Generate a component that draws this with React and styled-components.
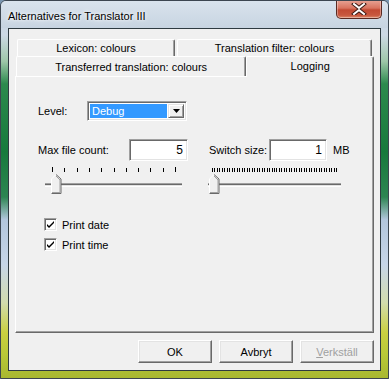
import React from 'react'
import styled, { createGlobalStyle } from 'styled-components';

const GlobalStyle = createGlobalStyle`
  body {
    margin: 0;
    background: #7a96b0;
    font-family: "Liberation Sans", Arial, sans-serif;
  }
`;

function Slider({ width, ticks, tickStart, tickEnd, thumbX, big }) {
  const list = [];
  for (let i = 0; i <= ticks; i++) {
    const x = Math.round(tickStart + (i * (tickEnd - tickStart)) / ticks) + 0.5;
    const tall = big && (i === 0 || i === ticks);
    list.push(<line key={i} x1={x} x2={x} y1={tall ? 1 : 2} y2={6} stroke="#000" strokeWidth="1" />);
  }
  return (
    <SliderSvg width={width} height={30} viewBox={`0 0 ${width} 30`}>
      {list}
      <rect x="1" y="17" width={width - 3} height="1" fill="#a0a0a0" />
      <rect x="1" y="18" width={width - 3} height="1" fill="#696969" />
      <rect x="1" y="19" width={width - 3} height="1" fill="#e3e3e3" />
      <rect x="1" y="20" width={width - 3} height="1" fill="#ffffff" />
      <g transform={`translate(${thumbX},8)`}>
        <path d="M0 5 L5 0 L10 5 L10 20 L0 20 Z" fill="#f0f0f0" />
        <path d="M0.5 20 L0.5 5 L5 0.5" fill="none" stroke="#fff" />
        <path d="M5 0.5 L10 5 L10 19.5 L0.5 19.5" fill="none" stroke="#696969" />
        <path d="M5 2 L9 6 L9 18.5 L1 18.5" fill="none" stroke="#a0a0a0" />
      </g>
    </SliderSvg>
  );
}

function Check({ label }) {
  return (
    <CheckRow>
      <CheckBox>
        <svg width="11" height="11" viewBox="0 0 11 11">
          <path d="M2 4 L2 6 L4 8 L9 3 L9 1 L4 6 Z" fill="#000" />
        </svg>
      </CheckBox>
      <span>{label}</span>
    </CheckRow>
  );
}

function App() {
  return (
    <>
      <GlobalStyle />
      <Ventana>
        <BarraTitulo>
          <Titulo>Alternatives for Translator III</Titulo>
          <BotonCerrar>
            <svg width="16" height="12" viewBox="0 0 16 12">
              <path d="M3 1 L8 5 L13 1 M3 11 L8 7 L13 11" fill="none" stroke="#3b1a14" strokeWidth="4" strokeLinecap="square" />
              <path d="M3 1 L8 5 L13 1 M3 11 L8 7 L13 11" fill="none" stroke="#fff" strokeWidth="2" strokeLinecap="square" />
            </svg>
          </BotonCerrar>
        </BarraTitulo>
        <Cliente>
          <Pestanas>
            <FilaPestanas $atras>
              <Pestana $w={158}>Lexicon: colours</Pestana>
              <Pestana $w={195}>Translation filter: colours</Pestana>
            </FilaPestanas>
            <FilaPestanas>
              <Pestana $w={231} $alto={20}>Transferred translation: colours</Pestana>
              <Pestana $w={128} $alto={21} $activa>Logging</Pestana>
            </FilaPestanas>
            <Panel>
              <Fila>
                <Etiqueta $w={49}>Level:</Etiqueta>
                <Combo>
                  <ComboTexto>Debug</ComboTexto>
                  <ComboBoton>
                    <svg width="7" height="4" viewBox="0 0 7 4"><path d="M0 0 L7 0 L3.5 4 Z" fill="#000" /></svg>
                  </ComboBoton>
                </Combo>
              </Fila>
              <Campos>
                <Grupo $w={150}>
                  <Fila>
                    <Etiqueta>Max file count:</Etiqueta>
                    <Entrada $w={59} $auto>5</Entrada>
                  </Fila>
                  <SliderHueco $izq={6}>
                    <Slider width={140} ticks={10} tickStart={8} tickEnd={131} thumbX={7} big />
                  </SliderHueco>
                </Grupo>
                <Grupo $w={150} $margen={19}>
                  <Fila>
                    <Etiqueta $w={60} $izq={2}>Switch size:</Etiqueta>
                    <Entrada $w={58}>1</Entrada>
                    <Etiqueta $izq={6}>MB</Etiqueta>
                  </Fila>
                  <SliderHueco $izq={0}>
                    <Slider width={136} ticks={50} tickStart={5} tickEnd={129} thumbX={2} />
                  </SliderHueco>
                </Grupo>
              </Campos>
              <Checks>
                <Check label="Print date" />
                <Check label="Print time" />
              </Checks>
            </Panel>
          </Pestanas>
          <Botones>
            <Boton>OK</Boton>
            <Boton>Avbryt</Boton>
            <Boton disabled><u>V</u>erkställ</Boton>
          </Botones>
        </Cliente>
      </Ventana>
    </>
  );
}

const Ventana = styled.div`
  width: 389px;
  height: 379px;
  box-sizing: border-box;
  border: 1px solid #3c4650;
  border-radius: 6px 6px 0 0;
  display: flex;
  flex-direction: column;
  overflow: hidden;
  background:
    linear-gradient(90deg, rgba(255,255,255,0) 0, rgba(255,255,255,0) 8px, transparent 8px),
    linear-gradient(180deg,
      #c5d3e1 0%, #cdd9e5 9%, #9ec7a9 16%, #2c8a4d 22%, #177a3c 40%, #2d8552 52%,
      #b2c6dc 58%, #c7d6e8 70%, #d2dcae 80%, #c9d040 88%, #b8c838 94%, #a8b830 100%);
`;

const BarraTitulo = styled.div`
  height: 27px;
  display: flex;
  align-items: flex-start;
  background: linear-gradient(180deg, #d9e3ed 0%, #c7d4e1 100%);
  flex-shrink: 0;
`;

const Titulo = styled.div`
  margin: 9px 0 0 7px;
  font-size: 11px;
  color: #000;
  text-shadow: 0 0 6px #fff, 0 0 3px #fff;
`;

const BotonCerrar = styled.div`
  margin: -1px 6px 0 auto;
  width: 46px;
  height: 19px;
  box-sizing: border-box;
  border: 1px solid #5a2a22;
  border-top: none;
  border-radius: 0 0 5px 5px;
  background: linear-gradient(180deg, #e8a597 0%, #d8735f 45%, #c24a33 55%, #c8583f 85%, #dd8a6c 100%);
  box-shadow: inset 0 0 0 1px rgba(255,255,255,0.35);
  display: flex;
  align-items: center;
  justify-content: center;
`;

const Cliente = styled.div`
  flex: 1;
  margin: 0 7px 7px 7px;
  border: 1px solid #2e3a40;
  background: #f0f0f0;
  display: flex;
  flex-direction: column;
  padding: 10px 6px 7px 6px;
  font-size: 11px;
  color: #000;
`;

const Pestanas = styled.div`
  flex: 1;
  display: flex;
  flex-direction: column;
`;

const FilaPestanas = styled.div`
  display: flex;
  gap: ${p => (p.$atras ? '2px' : '0')};
  padding: ${p => (p.$atras ? '0 0 0 2px' : '0 0 0 1px')};
  align-items: flex-end;
  height: ${p => (p.$atras ? '17px' : '20px')};
  position: relative;
  z-index: ${p => (p.$atras ? 0 : 2)};
`;

const Pestana = styled.div`
  width: ${p => p.$w}px;
  height: ${p => p.$alto || 17}px;
  box-sizing: border-box;
  background: #f0f0f0;
  border-top: 1px solid #fff;
  border-left: 1px solid #fff;
  border-right: 1px solid #696969;
  box-shadow: inset -1px 0 #a0a0a0;
  border-radius: 2px 2px 0 0;
  display: flex;
  justify-content: center;
  align-items: ${p => (p.$activa ? 'flex-start' : 'center')};
  padding-top: ${p => (p.$activa ? '3px' : '0')};
  margin-bottom: ${p => (p.$activa ? '-1px' : '0')};
  white-space: nowrap;
`;

const Panel = styled.div`
  flex: 1;
  box-sizing: border-box;
  border-top: 1px solid #fff;
  border-left: 1px solid #fff;
  border-right: 1px solid #696969;
  border-bottom: 1px solid #696969;
  box-shadow: inset -1px -1px #a0a0a0;
  padding: 24px 0 0 22px;
  display: flex;
  flex-direction: column;
`;

const Fila = styled.div`
  display: flex;
  align-items: center;
`;

const Etiqueta = styled.span`
  width: ${p => (p.$w ? p.$w + 'px' : 'auto')};
  margin-left: ${p => p.$izq || 0}px;
  flex-shrink: 0;
`;

const Combo = styled.div`
  width: 100px;
  height: 20px;
  box-sizing: border-box;
  border: 1px solid;
  border-color: #a0a0a0 #fff #fff #a0a0a0;
  box-shadow: inset 1px 1px #696969, inset -1px -1px #e3e3e3;
  background: #fff;
  display: flex;
  padding: 2px 2px 2px 2px;
  gap: 1px;
`;

const ComboTexto = styled.div`
  flex: 1;
  background: #3399ff;
  color: #fff;
  padding-left: 2px;
  line-height: 14px;
`;

const ComboBoton = styled.div`
  width: 16px;
  box-sizing: border-box;
  background: #f0f0f0;
  border: 1px solid;
  border-color: #e3e3e3 #696969 #696969 #e3e3e3;
  box-shadow: inset 1px 1px #fff, inset -1px -1px #a0a0a0;
  display: flex;
  align-items: center;
  justify-content: center;
`;

const Campos = styled.div`
  display: flex;
  margin-top: 18px;
`;

const Grupo = styled.div`
  width: ${p => p.$w}px;
  margin-left: ${p => p.$margen || 0}px;
  display: flex;
  flex-direction: column;
`;

const Entrada = styled.div`
  width: ${p => p.$w}px;
  height: 22px;
  margin-left: ${p => (p.$auto ? 'auto' : '0')};
  box-sizing: border-box;
  border: 1px solid;
  border-color: #a0a0a0 #fff #fff #a0a0a0;
  box-shadow: inset 1px 1px #696969, inset -1px -1px #e3e3e3;
  background: #fff;
  text-align: right;
  padding: 3px 4px 0 0;
  font-size: 12px;
`;

const SliderHueco = styled.div`
  margin: 5px 0 0 ${p => p.$izq}px;
  height: 30px;
`;

const SliderSvg = styled.svg`
  display: block;
`;

const Checks = styled.div`
  margin: 22px 0 0 6px;
  display: flex;
  flex-direction: column;
  gap: 7px;
`;

const CheckRow = styled.div`
  display: flex;
  align-items: center;
  gap: 5px;
  height: 13px;
`;

const CheckBox = styled.div`
  width: 13px;
  height: 13px;
  box-sizing: border-box;
  border: 1px solid;
  border-color: #a0a0a0 #fff #fff #a0a0a0;
  box-shadow: inset 1px 1px #696969, inset -1px -1px #e3e3e3;
  background: #fff;
  display: flex;
  align-items: center;
  justify-content: center;
  svg { margin: 1px 0 0 0; }
`;

const Botones = styled.div`
  display: flex;
  justify-content: flex-end;
  gap: 7px;
  margin-top: 7px;
`;

const Boton = styled.button`
  width: 74px;
  height: 23px;
  box-sizing: border-box;
  background: #f0f0f0;
  border: 1px solid;
  border-color: #fff #696969 #696969 #fff;
  box-shadow: inset -1px -1px #a0a0a0, inset 1px 1px #e3e3e3;
  font-family: "Liberation Sans", Arial, sans-serif;
  font-size: 11px;
  color: #000;
  padding: 0;
  &:disabled {
    color: #a0a0a0;
  }
`;

export default App
